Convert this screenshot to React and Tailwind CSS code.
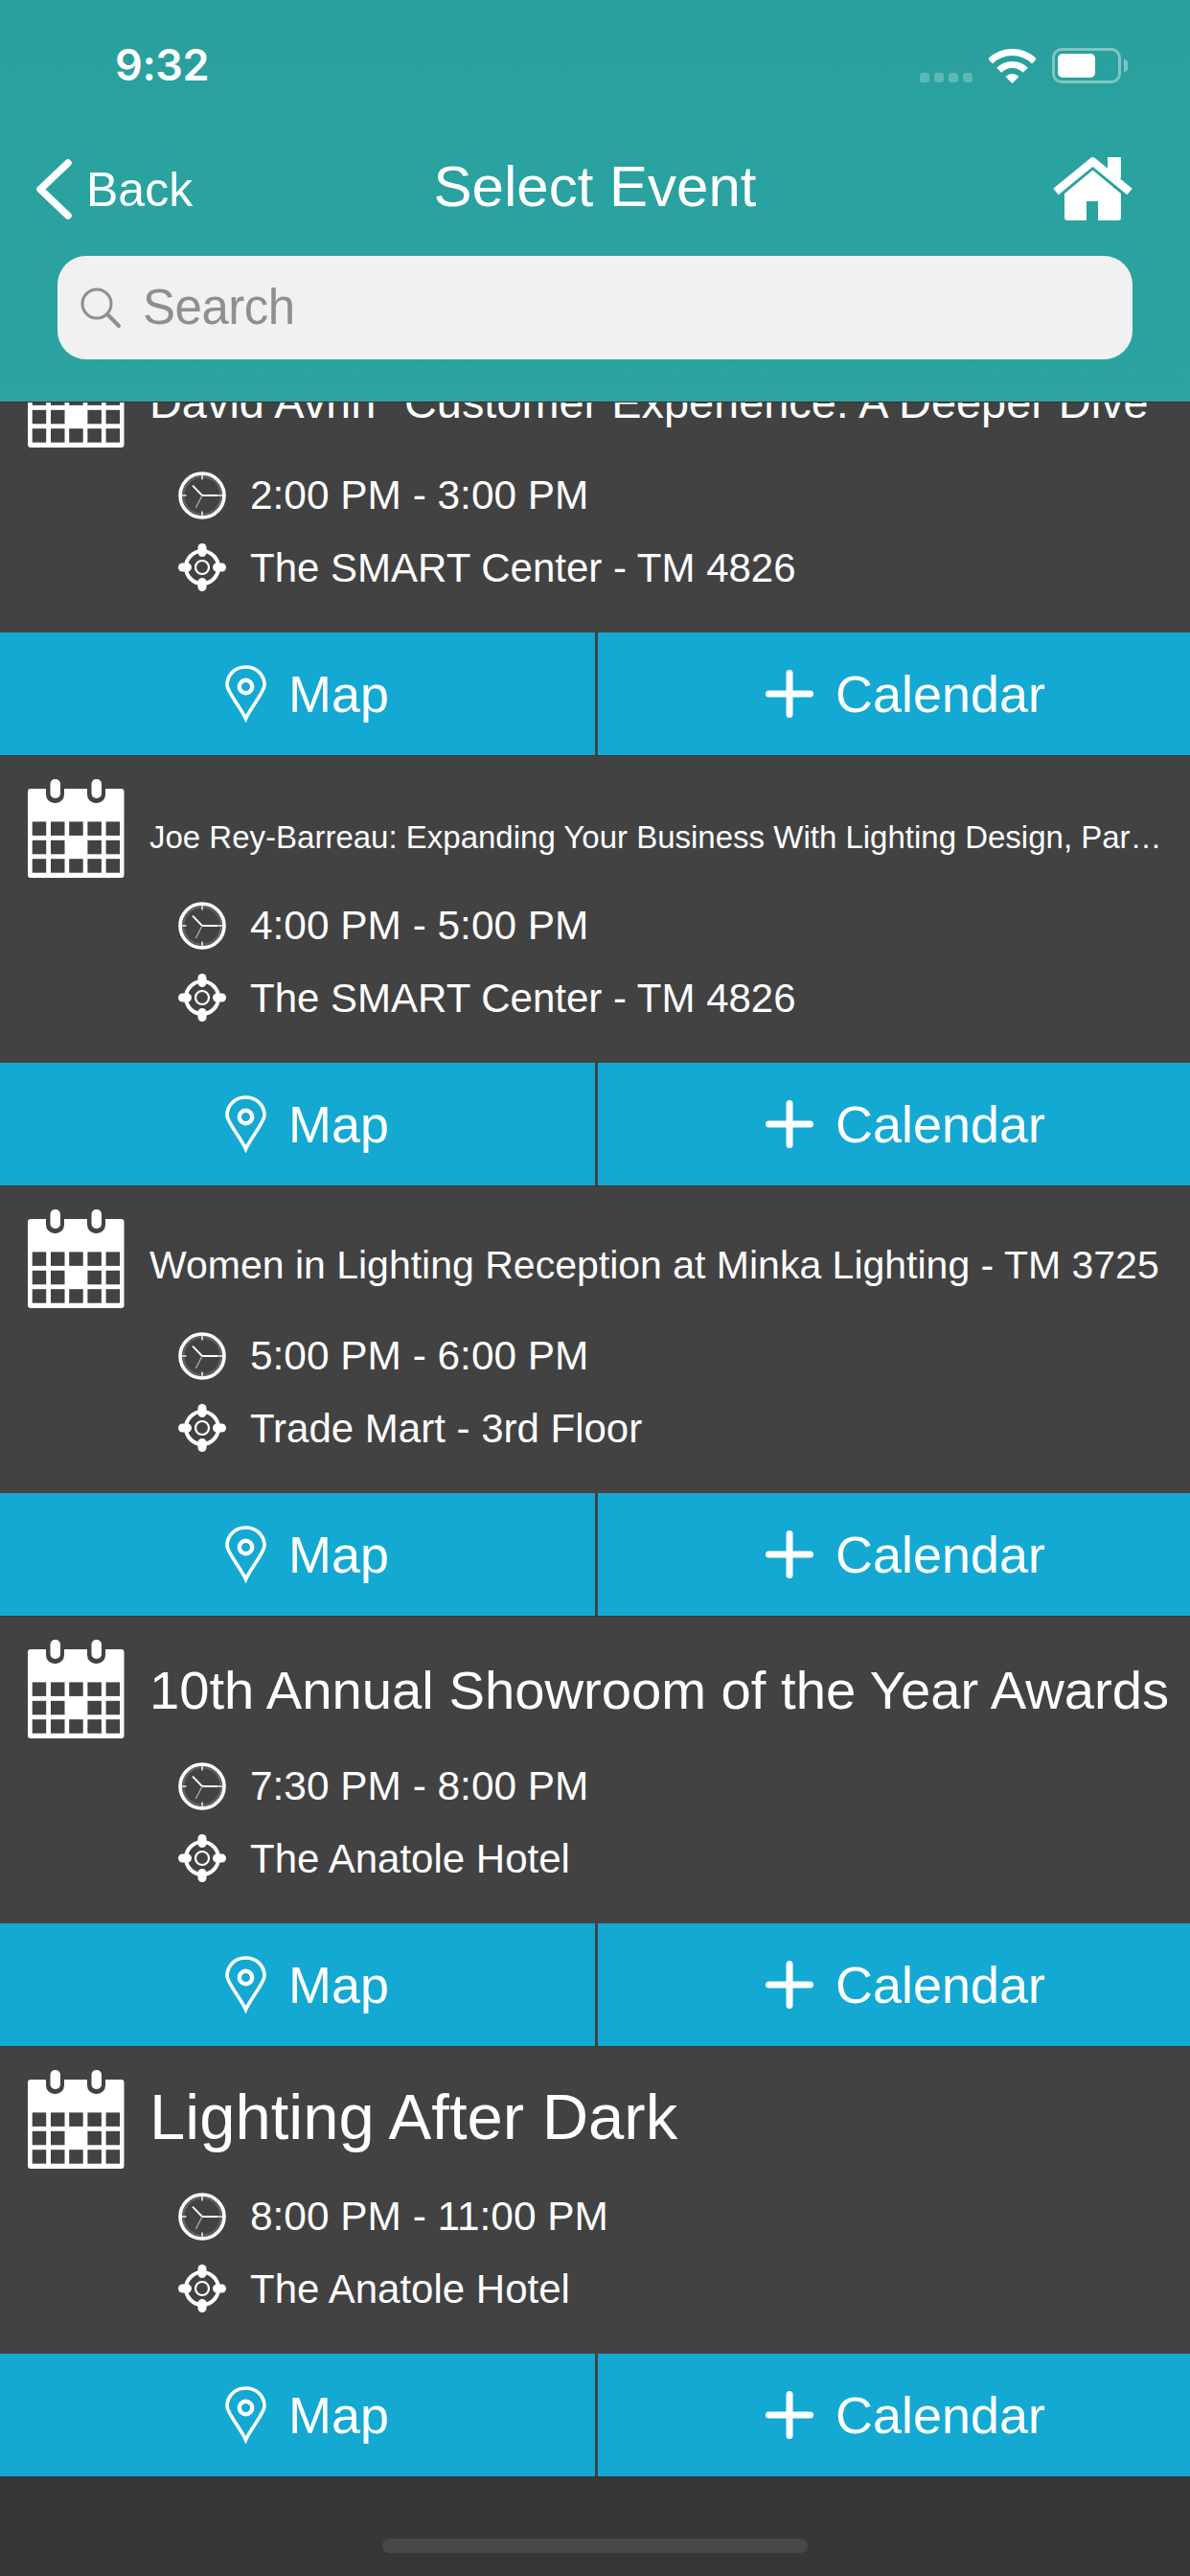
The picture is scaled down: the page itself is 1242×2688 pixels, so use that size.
import React from "react";

const events = [
  {
    title: 'David Avrin "Customer Experience: A Deeper Dive"',
    titleClass: "text-[46.9px] pt-[50px]",
    time: "2:00 PM - 3:00 PM",
    place: "The SMART Center - TM 4826",
  },
  {
    title: "Joe Rey-Barreau: Expanding Your Business With Lighting Design, Par…",
    titleClass: "text-[33px] pt-[55px]",
    time: "4:00 PM - 5:00 PM",
    place: "The SMART Center - TM 4826",
  },
  {
    title: "Women in Lighting Reception at Minka Lighting - TM 3725",
    titleClass: "text-[41px] pt-[52px]",
    time: "5:00 PM - 6:00 PM",
    place: "Trade Mart - 3rd Floor",
  },
  {
    title: "10th Annual Showroom of the Year Awards",
    titleClass: "text-[56.2px] pt-[47px]",
    time: "7:30 PM - 8:00 PM",
    place: "The Anatole Hotel",
  },
  {
    title: "Lighting After Dark",
    titleClass: "text-[67px] pt-[43px]",
    time: "8:00 PM - 11:00 PM",
    place: "The Anatole Hotel",
  },
];

const CalendarIcon = () => {
  const cols = [4.7, 24, 43.2, 62.4, 81.6];
  const rows = [44.4, 63.8, 83.2];
  return (
    <svg width="101" height="103" viewBox="0 0 101 103" className="shrink-0">
      <rect x="0" y="10" width="100.5" height="93" rx="3" fill="#fff" />
      <path d="M19 9h19v7a9 9 0 0 1-9.5 9A9 9 0 0 1 19 16z" fill="#424242" />
      <path d="M62 9h19v7a9 9 0 0 1-9.5 9A9 9 0 0 1 62 16z" fill="#424242" />
      <rect x="23.5" y="0" width="10.5" height="20" rx="5" fill="#fff" />
      <rect x="66.5" y="0" width="10.5" height="20" rx="5" fill="#fff" />
      {rows.map((y, r) =>
        cols.map((x, c) =>
          r === 1 && c === 2 ? null : (
            <rect key={`${r}-${c}`} x={x} y={y} width="14.5" height="14.5" fill="#424242" />
          )
        )
      )}
    </svg>
  );
};

const ClockIcon = () => {
  const ticks = Array.from({ length: 60 }, (_, i) => i * 6);
  return (
    <svg width="50" height="50" viewBox="0 0 50 50" className="shrink-0">
      {ticks.map((a) => (
        <line
          key={a}
          x1="25"
          y1="3"
          x2="25"
          y2={a % 90 === 0 ? 8.5 : 6.5}
          stroke={a % 90 === 0 ? "#fff" : "#7c7c7c"}
          strokeWidth={a % 90 === 0 ? 1.4 : 1}
          transform={`rotate(${a} 25 25)`}
        />
      ))}
      <circle cx="25" cy="25" r="23" fill="none" stroke="#fff" strokeWidth="3.6" />
      <path d="M15 14.7L25 25H41.5" fill="none" stroke="#fff" strokeWidth="1.8" />
      <path d="M25 25L18.3 38" fill="none" stroke="#a8a8a8" strokeWidth="1.4" />
    </svg>
  );
};

const TargetIcon = () => (
  <svg width="50" height="50" viewBox="0 0 50 50" className="shrink-0">
    <circle cx="25" cy="25" r="17" fill="none" stroke="#fff" strokeWidth="4" />
    <circle cx="25" cy="25" r="7" fill="none" stroke="#fff" strokeWidth="2.2" />
    <rect x="20.5" y="0" width="9" height="14" rx="4.5" fill="#fff" />
    <rect x="20.5" y="36" width="9" height="14" rx="4.5" fill="#fff" />
    <rect x="0" y="20.5" width="14" height="9" rx="4.5" fill="#fff" />
    <rect x="36" y="20.5" width="14" height="9" rx="4.5" fill="#fff" />
  </svg>
);

const PinIcon = () => (
  <svg width="43" height="60" viewBox="0 0 43 60" className="shrink-0">
    <path
      d="M21.5 56C17 45 2 28 2 21C2 10 10.5 2 21.5 2C32.5 2 41 10 41 21C41 28 26 45 21.5 56Z"
      fill="none"
      stroke="#fff"
      strokeWidth="3.6"
      strokeLinejoin="miter"
    />
    <circle cx="21.5" cy="22.5" r="6.7" fill="none" stroke="#fff" strokeWidth="4.4" />
  </svg>
);

const PlusIcon = () => (
  <svg width="50" height="50" viewBox="0 0 50 50" className="shrink-0">
    <path d="M25 3.5V46.5M3.5 25H46.5" stroke="#fff" strokeWidth="7" strokeLinecap="round" />
  </svg>
);

const StatusIcons = () => (
  <div className="flex items-end">
    <div className="flex gap-[5px] mb-px">
      {[0, 1, 2, 3].map((i) => (
        <div key={i} className="w-[10px] h-[10px] rounded-[3px] bg-white/25" />
      ))}
    </div>
    <svg width="49" height="36" viewBox="0 0 49 36" className="ml-[17px]">
      <path d="M1.5 13A32.5 32.5 0 0 1 47.5 13" fill="none" stroke="#fff" strokeWidth="7" />
      <path d="M10.7 22.2A19.5 19.5 0 0 1 38.3 22.2" fill="none" stroke="#fff" strokeWidth="7" />
      <path d="M24.5 36L17.4 28.9A10 10 0 0 1 31.6 28.9Z" fill="#fff" />
    </svg>
    <div className="ml-[17px] flex items-center">
      <div className="w-[72px] h-[37px] rounded-[10px] border-[3px] border-white/40 p-[3px]">
        <div className="w-[39px] h-full rounded-[5px] bg-white" />
      </div>
      <div className="ml-[3px] w-[4px] h-[13px] rounded-r-full bg-white/40" />
    </div>
  </div>
);

const Header = () => (
  <div className="relative z-10 h-[420px] bg-gradient-to-b from-[#29a09d] to-[#2ba4a1] border-b border-[#333333]">
    <div className="flex items-center justify-between h-[134px] pl-[120px] pr-[65px] pt-[2px]">
      <span className="text-[45px] font-semibold tracking-[-0.4px] text-white font-['Inter',sans-serif]">9:32</span>
      <StatusIcons />
    </div>
    <div className="flex items-center justify-between h-[74px] mt-[26px] pl-[38px] pr-[60px]">
      <div className="flex items-center w-[322px]">
        <svg width="37" height="63" viewBox="0 0 37 63">
          <path d="M33 4L4 31.5L33 59" fill="none" stroke="#fff" strokeWidth="7.5" strokeLinecap="round" strokeLinejoin="round" />
        </svg>
        <span className="ml-[15px] text-[50px] text-white pt-[2px]">Back</span>
      </div>
      <span className="text-[60px] text-white leading-none mt-[-4px]">Select Event</span>
      <div className="flex justify-end w-[300px]">
        <svg width="83" height="66" viewBox="0 0 83 66">
          <path d="M57 0H71V22H57Z" fill="#fff" />
          <path d="M3 36L41.5 4.5L80 36" fill="none" stroke="#fff" strokeWidth="8.5" strokeLinejoin="round" />
          <path d="M41.5 13.5L71 38V63a3 3 0 0 1-3 3H47V46H35V66H15a3 3 0 0 1-3-3V38Z" fill="#fff" />
        </svg>
      </div>
    </div>
    <div className="flex items-center h-[108px] mx-[60px] mt-[33px] pl-[24px] rounded-[30px] bg-[#f1f1f1]">
      <svg width="43" height="43" viewBox="0 0 43 43">
        <circle cx="17" cy="17" r="15" fill="none" stroke="#8e8e93" strokeWidth="3" />
        <path d="M28 28L40 40" stroke="#8e8e93" strokeWidth="4" strokeLinecap="round" />
      </svg>
      <span className="ml-[22px] text-[51px] tracking-[-0.5px] text-[#8e8e93]">Search</span>
    </div>
  </div>
);

const EventRow = ({ event }) => (
  <div>
    <div className="h-[320px] bg-[#424242] text-white">
      <div className="flex h-[139px] pl-[29px]">
        <div className="pt-[24px] shrink-0">
          <CalendarIcon />
        </div>
        <div className={`ml-[26px] min-w-0 flex-1 whitespace-nowrap leading-[60px] ${event.titleClass}`}>
          {event.title}
        </div>
      </div>
      <div className="pl-[186px] text-[42px]">
        <div className="flex items-center h-[75px]">
          <ClockIcon />
          <span className="ml-[25px] pt-px text-[42.4px]">{event.time}</span>
        </div>
        <div className="flex items-center h-[75px]">
          <TargetIcon />
          <span className="ml-[25px] pt-px">{event.place}</span>
        </div>
      </div>
    </div>
    <div className="flex h-[129px] border-b border-[#373737] bg-[#424242] text-white text-[54px]">
      <div className="flex items-center justify-center w-[621px] pl-[20px] bg-[#14a9d2]">
        <PinIcon />
        <span className="ml-[23px]">Map</span>
      </div>
      <div className="flex items-center justify-center flex-1 ml-[3px] pl-[24px] bg-[#14a9d2]">
        <PlusIcon />
        <span className="ml-[23px]">Calendar</span>
      </div>
    </div>
  </div>
);

export default function App() {
  return (
    <div className="relative h-[2688px] w-[1242px] overflow-hidden bg-[#373737] font-['Liberation_Sans',Arial,sans-serif]">
      <Header />
      <div className="-mt-[80px]">
        {events.map((event) => (
          <EventRow key={event.title} event={event} />
        ))}
      </div>
      <div className="flex justify-center pt-[64px]">
        <div className="w-[444px] h-[15px] rounded-full bg-[#484848]" />
      </div>
    </div>
  );
}
